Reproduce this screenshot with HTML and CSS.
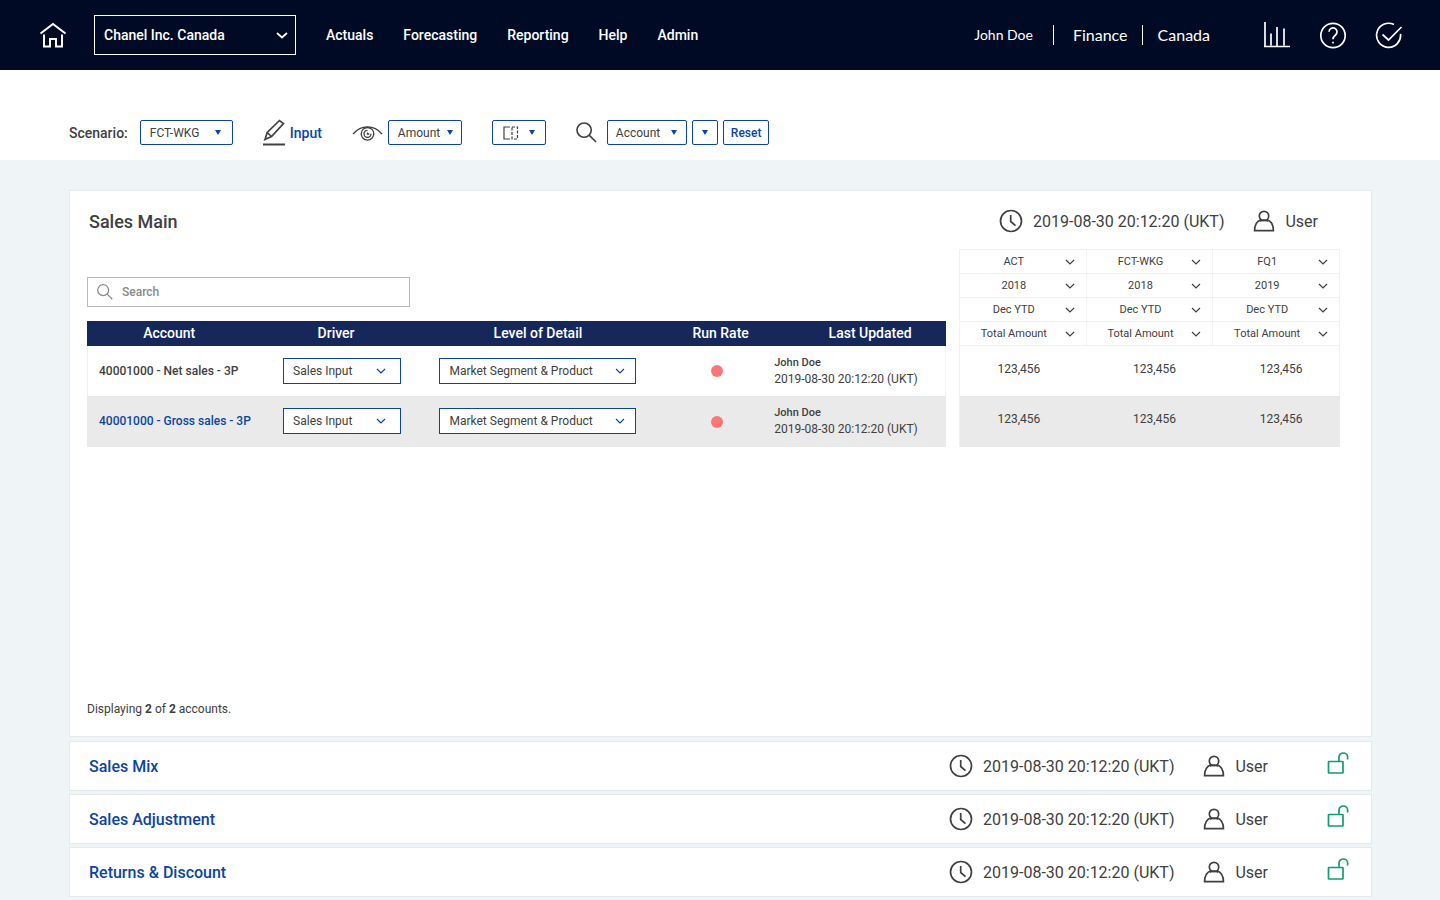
FILE: index.html
```html
<!DOCTYPE html>
<html lang="en">
<head>
    <meta charset="UTF-8">
    <meta name="viewport" content="width=device-width, initial-scale=1.0">
    <title>Forecasting - Sales Main</title>
    <link rel="stylesheet" href="styles.css">
</head>
<body>
    <!-- shared icons -->
    <svg class="sprite" aria-hidden="true">
        <symbol id="clock" viewBox="0 0 24 24">
            <circle cx="12" cy="12" r="10.500"/>
            <path d="M11.700 6v6.500l4.800 4.200"/>
        </symbol>
        <symbol id="person" viewBox="0 0 22 22">
            <circle cx="11" cy="6" r="4.700"/>
            <path d="M7.800 9.800C4 11.300 1.600 14.800 1.600 20.600h18.800c0-5.800-2.400-9.300-6.200-10.800"/>
            <path d="M7 11.200c2.500-1.500 5.500-1.500 8 0"/>
        </symbol>
        <symbol id="unlock" viewBox="0 0 22 22">
            <rect x="1.500" y="9.500" width="14.500" height="11.500" rx="0.500"/>
            <path d="M12 9.500V5a4.300 4 0 0 1 8.600 0v2.500"/>
        </symbol>
        <symbol id="search" viewBox="0 0 22 22">
            <circle cx="8.500" cy="8.500" r="7.500"/>
            <path d="M14 14l7 7"/>
        </symbol>
    </svg>

    <header class="topbar">
        <a href="#" class="home" aria-label="Home">
            <svg class="icon" width="28" height="26" viewBox="0 0 28 26">
                <path d="M1.500 11.500L14 2l12.500 9.500M5 12.500V24.500h6v-7.500h6v7.500h6V12.500"/>
            </svg>
        </a>
        <select class="company" aria-label="Company">
            <option>Chanel Inc. Canada</option>
        </select>
        <nav class="menu">
            <a href="#">Actuals</a>
            <a href="#">Forecasting</a>
            <a href="#">Reporting</a>
            <a href="#">Help</a>
            <a href="#">Admin</a>
        </nav>
        <div class="account-info">
            <span class="name">John Doe</span>
            <span class="dept">Finance</span>
            <span class="country">Canada</span>
        </div>
        <div class="shortcuts">
            <button aria-label="Charts">
                <svg class="icon" width="28" height="28" viewBox="0 0 28 28">
                    <path d="M2 1v25M1 25.500h26M8 12.500v12M14 6v19M21 7.500v17"/>
                </svg>
            </button>
            <button aria-label="Help">
                <svg class="icon" width="28" height="28" viewBox="0 0 28 28">
                    <circle cx="14" cy="14.500" r="12.200"/>
                    <path d="M10 10.800a4 4 0 1 1 6.500 3.200c-1.700 1.300-2.500 2-2.500 4.300"/>
                    <path d="M14 20.800v1.800"/>
                </svg>
            </button>
            <button aria-label="Approvals">
                <svg class="icon" width="28" height="28" viewBox="0 0 28 28">
                    <path d="M19 3.600A12 12 0 1 0 25.500 12.800"/>
                    <path d="M7.500 13.500l6 5.500L26.500 6"/>
                </svg>
            </button>
        </div>
    </header>

    <div class="toolbar">
        <div class="group scenario">
            <label for="scenario">Scenario:</label>
            <select id="scenario" class="filter"><option>FCT-WKG</option></select>
        </div>
        <button class="input-btn">
            <svg class="icon" width="23" height="28" viewBox="0 0 23 28">
                <path d="M2 20.500l2.200-7L16.500 1.500l4 3L8.500 17.500zM4.200 13.500l4.300 4"/>
                <path d="M0 25.500h22" stroke-width="2"/>
            </svg>
            Input
        </button>
        <div class="group">
            <svg class="icon eye" width="31" height="16" viewBox="0 0 31 16">
                <path d="M1 9C9-.5 22-.5 30 9"/>
                <circle cx="15.500" cy="8.800" r="6.300"/>
                <path d="M15.500 5.300a3.500 3.500 0 1 0 3.500 3.500M15.500 7.500v1.500h1.800"/>
            </svg>
            <select class="filter amount" aria-label="Display"><option>Amount</option></select>
        </div>
        <button class="compare" aria-label="Compare columns">
            <svg class="icon" width="16" height="14" viewBox="0 0 16 14">
                <path d="M7 1H1v12h6"/>
                <path d="M9 1h5.500v12H9z" stroke-dasharray="3 1.500"/>
            </svg>
            <svg width="6" height="5" viewBox="0 0 6 5"><path d="M0 0h6L3 5z" fill="#0b45a0"/></svg>
        </button>
        <div class="group find">
            <svg class="icon" width="21" height="21"><use href="#search"/></svg>
            <div class="find-fields">
                <select class="filter field" aria-label="Search field"><option>Account</option></select>
                <select class="filter value" aria-label="Search value"><option></option></select>
                <button class="reset">Reset</button>
            </div>
        </div>
    </div>

    <main>
        <section class="panel">
            <div class="panel-head">
                <h1>Sales Main</h1>
                <div class="meta">
                    <svg class="icon" width="24" height="24"><use href="#clock"/></svg>
                    <span class="date">2019-08-30 20:12:20 (UKT)</span>
                    <svg class="icon" width="22" height="22"><use href="#person"/></svg>
                    <span class="user">User</span>
                </div>
            </div>

            <div class="tables">
                <div class="accounts">
                    <label class="search">
                        <svg class="icon" width="16" height="16"><use href="#search"/></svg>
                        <input type="text" placeholder="Search" aria-label="Search accounts">
                    </label>
                    <table class="list">
                        <thead>
                            <tr>
                                <th class="col-account">Account</th>
                                <th class="col-driver">Driver</th>
                                <th class="col-level">Level of Detail</th>
                                <th class="col-rate">Run Rate</th>
                                <th class="col-updated">Last Updated</th>
                            </tr>
                        </thead>
                        <tbody>
                            <tr>
                                <td class="col-account">40001000 - Net sales - 3P</td>
                                <td class="col-driver"><select class="cell-select" aria-label="Driver"><option>Sales Input</option></select></td>
                                <td><select class="cell-select wide" aria-label="Level of detail"><option>Market Segment &amp; Product</option></select></td>
                                <td class="col-rate"><span class="dot"></span></td>
                                <td class="col-updated"><strong>John Doe</strong>2019-08-30 20:12:20 (UKT)</td>
                            </tr>
                            <tr>
                                <td class="col-account"><a href="#">40001000 - Gross sales - 3P</a></td>
                                <td class="col-driver"><select class="cell-select" aria-label="Driver"><option>Sales Input</option></select></td>
                                <td><select class="cell-select wide" aria-label="Level of detail"><option>Market Segment &amp; Product</option></select></td>
                                <td class="col-rate"><span class="dot"></span></td>
                                <td class="col-updated"><strong>John Doe</strong>2019-08-30 20:12:20 (UKT)</td>
                            </tr>
                        </tbody>
                    </table>
                </div>

                <table class="values">
                    <thead>
                        <tr>
                            <th><select aria-label="Scenario 1"><option>ACT</option></select></th>
                            <th><select aria-label="Scenario 2"><option>FCT-WKG</option></select></th>
                            <th><select aria-label="Scenario 3"><option>FQ1</option></select></th>
                        </tr>
                        <tr>
                            <th><select aria-label="Year 1"><option>2018</option></select></th>
                            <th><select aria-label="Year 2"><option>2018</option></select></th>
                            <th><select aria-label="Year 3"><option>2019</option></select></th>
                        </tr>
                        <tr>
                            <th><select aria-label="Period 1"><option>Dec YTD</option></select></th>
                            <th><select aria-label="Period 2"><option>Dec YTD</option></select></th>
                            <th><select aria-label="Period 3"><option>Dec YTD</option></select></th>
                        </tr>
                        <tr>
                            <th><select aria-label="Measure 1"><option>Total Amount</option></select></th>
                            <th><select aria-label="Measure 2"><option>Total Amount</option></select></th>
                            <th><select aria-label="Measure 3"><option>Total Amount</option></select></th>
                        </tr>
                    </thead>
                    <tbody>
                        <tr><td>123,456</td><td>123,456</td><td>123,456</td></tr>
                        <tr><td>123,456</td><td>123,456</td><td>123,456</td></tr>
                    </tbody>
                </table>
            </div>

            <p class="count">Displaying <b>2</b> of <b>2</b> accounts.</p>
        </section>

        <section class="row">
            <h2><a href="#">Sales Mix</a></h2>
            <div class="meta">
                <svg class="icon" width="24" height="24"><use href="#clock"/></svg>
                <span class="date">2019-08-30 20:12:20 (UKT)</span>
                <svg class="icon" width="22" height="22"><use href="#person"/></svg>
                <span class="user">User</span>
            </div>
            <button class="lock" aria-label="Lock Sales Mix"><svg class="icon" width="22" height="22"><use href="#unlock"/></svg></button>
        </section>
        <section class="row">
            <h2><a href="#">Sales Adjustment</a></h2>
            <div class="meta">
                <svg class="icon" width="24" height="24"><use href="#clock"/></svg>
                <span class="date">2019-08-30 20:12:20 (UKT)</span>
                <svg class="icon" width="22" height="22"><use href="#person"/></svg>
                <span class="user">User</span>
            </div>
            <button class="lock" aria-label="Lock Sales Adjustment"><svg class="icon" width="22" height="22"><use href="#unlock"/></svg></button>
        </section>
        <section class="row">
            <h2><a href="#">Returns &amp; Discount</a></h2>
            <div class="meta">
                <svg class="icon" width="24" height="24"><use href="#clock"/></svg>
                <span class="date">2019-08-30 20:12:20 (UKT)</span>
                <svg class="icon" width="22" height="22"><use href="#person"/></svg>
                <span class="user">User</span>
            </div>
            <button class="lock" aria-label="Lock Returns &amp; Discount"><svg class="icon" width="22" height="22"><use href="#unlock"/></svg></button>
        </section>
    </main>
</body>
</html>
```
FILE: styles.css
```css
* {
    box-sizing: border-box;
}
body {
    margin: 0;
    min-height: 100vh;
    display: flex;
    flex-direction: column;
    font-family: Roboto, "Liberation Sans", sans-serif;
    font-size: 12px;
    color: #404040;
    background: #eff4f7;
}
a {
    color: #0b45a0;
    text-decoration: none;
}
h1, h2, p {
    margin: 0;
}
button, select, input {
    font-family: inherit;
    font-size: 12px;
    color: inherit;
    margin: 0;
}
button {
    display: flex;
    align-items: center;
    padding: 0;
    border: none;
    background: none;
}
select {
    appearance: none;
    border: none;
    border-radius: 0;
    background: #fff no-repeat;
}
.sprite {
    display: none;
}
.icon {
    flex: none;
    fill: none;
    stroke: currentColor;
    stroke-width: 1.7;
}

/* top bar */
.topbar {
    display: flex;
    align-items: center;
    height: 70px;
    padding: 0 37px 0 39px;
    background: #000a24;
    color: #fff;
}
.home {
    display: flex;
    margin-right: 27px;
    color: #fff;
}
.home .icon {
    stroke-width: 2;
}
.company {
    width: 202px;
    height: 40px;
    padding: 0 9px;
    border: 1px solid #fff;
    color: #fff;
    font-size: 14px;
    font-weight: 500;
    background-color: transparent;
    background-image: url("data:image/svg+xml,%3Csvg xmlns='http://www.w3.org/2000/svg' width='12' height='8' fill='none' stroke='white' stroke-width='1.7'%3E%3Cpath d='M1 2l5 4.500 5-4.500'/%3E%3C/svg%3E");
    background-position: right 7px center;
}
.menu {
    display: flex;
    gap: 30px;
    margin-left: 30px;
}
.menu a {
    color: #fff;
    font-size: 14px;
    font-weight: 500;
}
.account-info {
    display: flex;
    align-items: center;
    margin-left: auto;
    font-family: Lato, sans-serif;
    font-size: 16px;
    line-height: 20px;
}
.account-info .name {
    padding-right: 20px;
    font-size: 14px;
}
.account-info .dept {
    padding: 0 14px 0 19px;
    border: solid #fff;
    border-width: 0 1px;
}
.account-info .country {
    padding-left: 15px;
}
.shortcuts {
    display: flex;
    gap: 28px;
    margin-left: 53px;
}

/* filters */
.toolbar {
    display: flex;
    align-items: center;
    gap: 30px;
    height: 90px;
    padding: 35px 69px 0;
    background: #fff;
}
.group {
    display: flex;
    align-items: center;
    gap: 5px;
}
.scenario {
    gap: 12px;
}
.scenario label {
    font-size: 14px;
    font-weight: 500;
}
.filter, .compare, .reset {
    height: 25px;
    border: 1px solid #0b45a0;
    border-radius: 2px;
}
.filter {
    width: 93px;
    padding: 0 9px;
    background-image: url("data:image/svg+xml,%3Csvg xmlns='http://www.w3.org/2000/svg' width='6' height='5'%3E%3Cpath d='M0 0h6L3 5z' fill='%230b45a0'/%3E%3C/svg%3E");
    background-position: right 11px center;
}
.amount {
    width: 74px;
    background-position: right 8px center;
}
.field {
    width: 80px;
    padding: 0 8px;
    background-position: right 9px center;
}
.value {
    width: 26px;
    background-position: center;
}
.input-btn {
    gap: 4px;
    color: #0b45a0;
    font-size: 14px;
    font-weight: 500;
}
.input-btn .icon {
    color: #404040;
}
.eye {
    stroke-width: 1.3;
}
.compare {
    gap: 10px;
    padding: 0 10px;
}
.compare .icon {
    stroke-width: 1.2;
}
.find {
    gap: 10px;
}
.find-fields {
    display: flex;
    gap: 5px;
}
.reset {
    padding: 0 7px;
    color: #0b45a0;
    font-weight: 500;
}

/* content */
main {
    flex: 1;
    display: flex;
    flex-direction: column;
    gap: 3px;
    padding: 30px 68px 3px 69px;
}
.panel, .row {
    background: #fff;
    border: 1px solid #e4e9ec;
}
.panel {
    flex: 1;
    display: flex;
    flex-direction: column;
    margin-bottom: 1px;
    padding: 0 31px 19px 17px;
}
.panel-head {
    display: flex;
    align-items: center;
    justify-content: space-between;
    height: 58px;
    padding: 2px 22px 0 2px;
}
h1 {
    font-size: 18px;
    font-weight: 500;
}
.meta {
    display: flex;
    align-items: center;
    gap: 10px;
    font-size: 16px;
}
.date {
    margin-right: 19px;
}
.tables {
    display: grid;
    grid-template-columns: 1fr 381px;
    gap: 13px;
    align-items: end;
}
.search {
    display: flex;
    align-items: center;
    gap: 9px;
    width: 323px;
    height: 30px;
    margin-bottom: 14px;
    padding: 0 9px;
    border: 1px solid #b9b9b9;
    color: #8a8a8a;
}
.search input {
    flex: 1;
    padding: 0;
    border: none;
    outline: none;
}
.search input::placeholder {
    color: #8a8a8a;
    font-weight: 500;
}
table {
    width: 100%;
    table-layout: fixed;
    border-collapse: collapse;
}
th, td {
    padding: 0;
}
tbody tr {
    height: 50px;
}
tbody tr:nth-child(even) {
    height: 51px;
    background: #eaeaea;
}
.list, .values {
    box-shadow: inset 0 0 0 1px #eef2f4;
}
.list thead tr {
    height: 25px;
    background: #16285a;
    color: #fff;
}
.list th {
    font-size: 14px;
    font-weight: 500;
}
.list td {
    text-align: center;
}
.list .col-account {
    width: 21%;
}
.list th.col-account {
    padding-right: 16px;
}
.list td.col-account {
    padding-left: 12px;
    text-align: left;
    font-weight: 500;
    white-space: nowrap;
}
.list .col-driver {
    width: 16%;
}
.list td.col-driver {
    padding-left: 12px;
}
.list .col-level {
    width: 31%;
}
.list .col-rate {
    width: 12%;
    padding-right: 4px;
}
.list td.col-rate {
    padding-right: 12px;
}
.list .col-updated {
    width: 20%;
    white-space: nowrap;
}
.list th.col-updated {
    padding-left: 20px;
}
.list td.col-updated {
    text-align: left;
    line-height: 17px;
}
.col-updated strong {
    display: block;
    font-size: 11px;
    font-weight: 500;
}
.cell-select {
    width: 118px;
    height: 26px;
    padding: 0 9px;
    border: 1px solid #0b45a0;
    vertical-align: middle;
    background-image: url("data:image/svg+xml,%3Csvg xmlns='http://www.w3.org/2000/svg' width='10' height='6' fill='none' stroke='%230b45a0' stroke-width='1.2'%3E%3Cpath d='M1 1l4 4 4-4'/%3E%3C/svg%3E");
    background-position: right 14px center;
}
.cell-select.wide {
    width: 197px;
    background-position: right 10px center;
}
.dot {
    display: inline-block;
    width: 12px;
    height: 12px;
    border-radius: 50%;
    background: #fb7676;
    vertical-align: middle;
}
.values th {
    height: 24px;
    border: 1px solid #eef2f4;
}
.values select {
    display: block;
    width: 100%;
    height: 23px;
    padding: 0 28px 0 10px;
    font-size: 11px;
    text-align: center;
    background-image: url("data:image/svg+xml,%3Csvg xmlns='http://www.w3.org/2000/svg' width='10' height='6' fill='none' stroke='%23404040' stroke-width='1.2'%3E%3Cpath d='M1 1l4 4 4-4'/%3E%3C/svg%3E");
    background-position: right 11px center;
}
.values td {
    padding: 0 0 4px 10px;
    text-align: center;
}
.values td:first-child {
    padding: 0 8px 4px 0;
}
.count {
    margin-top: auto;
    line-height: 16px;
}

/* collapsed sections */
.row {
    display: flex;
    align-items: center;
    height: 50px;
    padding: 0 22px 0 19px;
}
h2 {
    margin-right: auto;
    font-size: 16px;
    font-weight: 500;
}
.lock {
    margin-left: 59px;
    padding-bottom: 6px;
    color: #0e9f6b;
}
```
